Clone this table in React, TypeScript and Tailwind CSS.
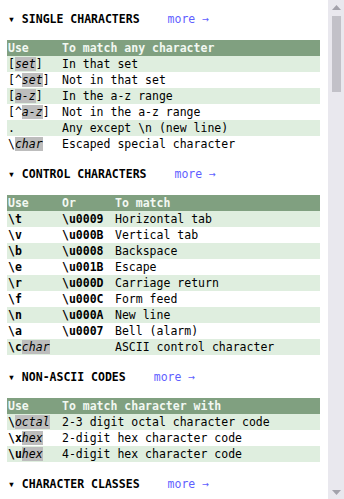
import type { ReactNode } from "react";

// placeholder part of a pattern: italic on a grey chip
function V({ children }: { children: ReactNode }) {
  return <span className="bg-[#bdbdbd] font-normal italic">{children}</span>;
}

type Section = {
  title: string;
  cols: string[];
  boldCols: number; // how many leading columns are set in bold
  rows: ReactNode[][];
};

const sections: Section[] = [
  {
    title: "SINGLE CHARACTERS",
    cols: ["Use", "To match any character"],
    boldCols: 0,
    rows: [
      [<>[<V>set</V>]</>, "In that set"],
      [<>[^<V>set</V>]</>, "Not in that set"],
      [<>[<V>a-z</V>]</>, "In the a-z range"],
      [<>[^<V>a-z</V>]</>, "Not in the a-z range"],
      [".", "Any except \\n (new line)"],
      [<>\<V>char</V></>, "Escaped special character"],
    ],
  },
  {
    title: "CONTROL CHARACTERS",
    cols: ["Use", "Or", "To match"],
    boldCols: 2,
    rows: [
      ["\\t", "\\u0009", "Horizontal tab"],
      ["\\v", "\\u000B", "Vertical tab"],
      ["\\b", "\\u0008", "Backspace"],
      ["\\e", "\\u001B", "Escape"],
      ["\\r", "\\u000D", "Carriage return"],
      ["\\f", "\\u000C", "Form feed"],
      ["\\n", "\\u000A", "New line"],
      ["\\a", "\\u0007", "Bell (alarm)"],
      [<>\c<V>char</V></>, "", "ASCII control character"],
    ],
  },
  {
    title: "NON-ASCII CODES",
    cols: ["Use", "To match character with"],
    boldCols: 1,
    rows: [
      [<>\<V>octal</V></>, "2-3 digit octal character code"],
      [<>\x<V>hex</V></>, "2-digit hex character code"],
      [<>\u<V>hex</V></>, "4-digit hex character code"],
    ],
  },
  {
    title: "CHARACTER CLASSES",
    cols: [],
    boldCols: 1,
    rows: [],
  },
];

function Table({ s }: { s: Section }) {
  const grid =
    s.cols.length === 3 ? "grid-cols-[54px_53px_1fr]" : "grid-cols-[54px_1fr]";
  return (
    <div className="flex flex-col">
      <div className={`grid ${grid} h-4 bg-[#80a080] font-bold text-[#f2f8f2]`}>
        {s.cols.map((c) => (
          <div key={c} className="pl-px whitespace-nowrap">
            {c}
          </div>
        ))}
      </div>
      {s.rows.map((r, i) => (
        <div
          key={i}
          className={`grid ${grid} h-4 ${i % 2 === 0 ? "bg-[#dfeedf]" : "bg-white"}`}
        >
          {r.map((cell, j) => (
            <div
              key={j}
              className={`pl-px whitespace-nowrap ${j < s.boldCols ? "font-bold" : ""}`}
            >
              {cell}
            </div>
          ))}
        </div>
      ))}
    </div>
  );
}

function Scrollbar() {
  return (
    <div className="flex h-full w-4 shrink-0 flex-col items-center bg-[#e9e8ee]">
      <div className="flex h-[14px] w-full items-center justify-center">
        <svg width="9" height="5" viewBox="0 0 9 5">
          <path d="M4.5 0 L9 5 L0 5 Z" fill="#a3a2ab" />
        </svg>
      </div>
      <div className="mt-[2px] h-[76px] w-[9px] bg-[#c2c1c8]" />
      <div className="flex-1" />
      <div className="flex h-[14px] w-full items-center justify-center">
        <svg width="9" height="5" viewBox="0 0 9 5">
          <path d="M0 0 L9 0 L4.5 5 Z" fill="#a3a2ab" />
        </svg>
      </div>
    </div>
  );
}

export default function App() {
  return (
    <div className="flex h-[499px] overflow-hidden bg-white font-['DejaVu_Sans_Mono',monospace] text-[11.5px] leading-4 text-black">
      <main className="flex min-w-0 flex-1 flex-col gap-3 pl-[7px] pr-2 pt-[9px]">
        {sections.map((s) => (
          <section key={s.title} className="flex flex-col gap-[11px]">
            <div className="flex h-5 items-center pl-px">
              <span className="font-bold">▾ {s.title}</span>
              <a className="ml-[28px] text-[#5f5fff]" href="#">
                more →
              </a>
            </div>
            {s.cols.length > 0 && <Table s={s} />}
          </section>
        ))}
      </main>
      <Scrollbar />
    </div>
  );
}
